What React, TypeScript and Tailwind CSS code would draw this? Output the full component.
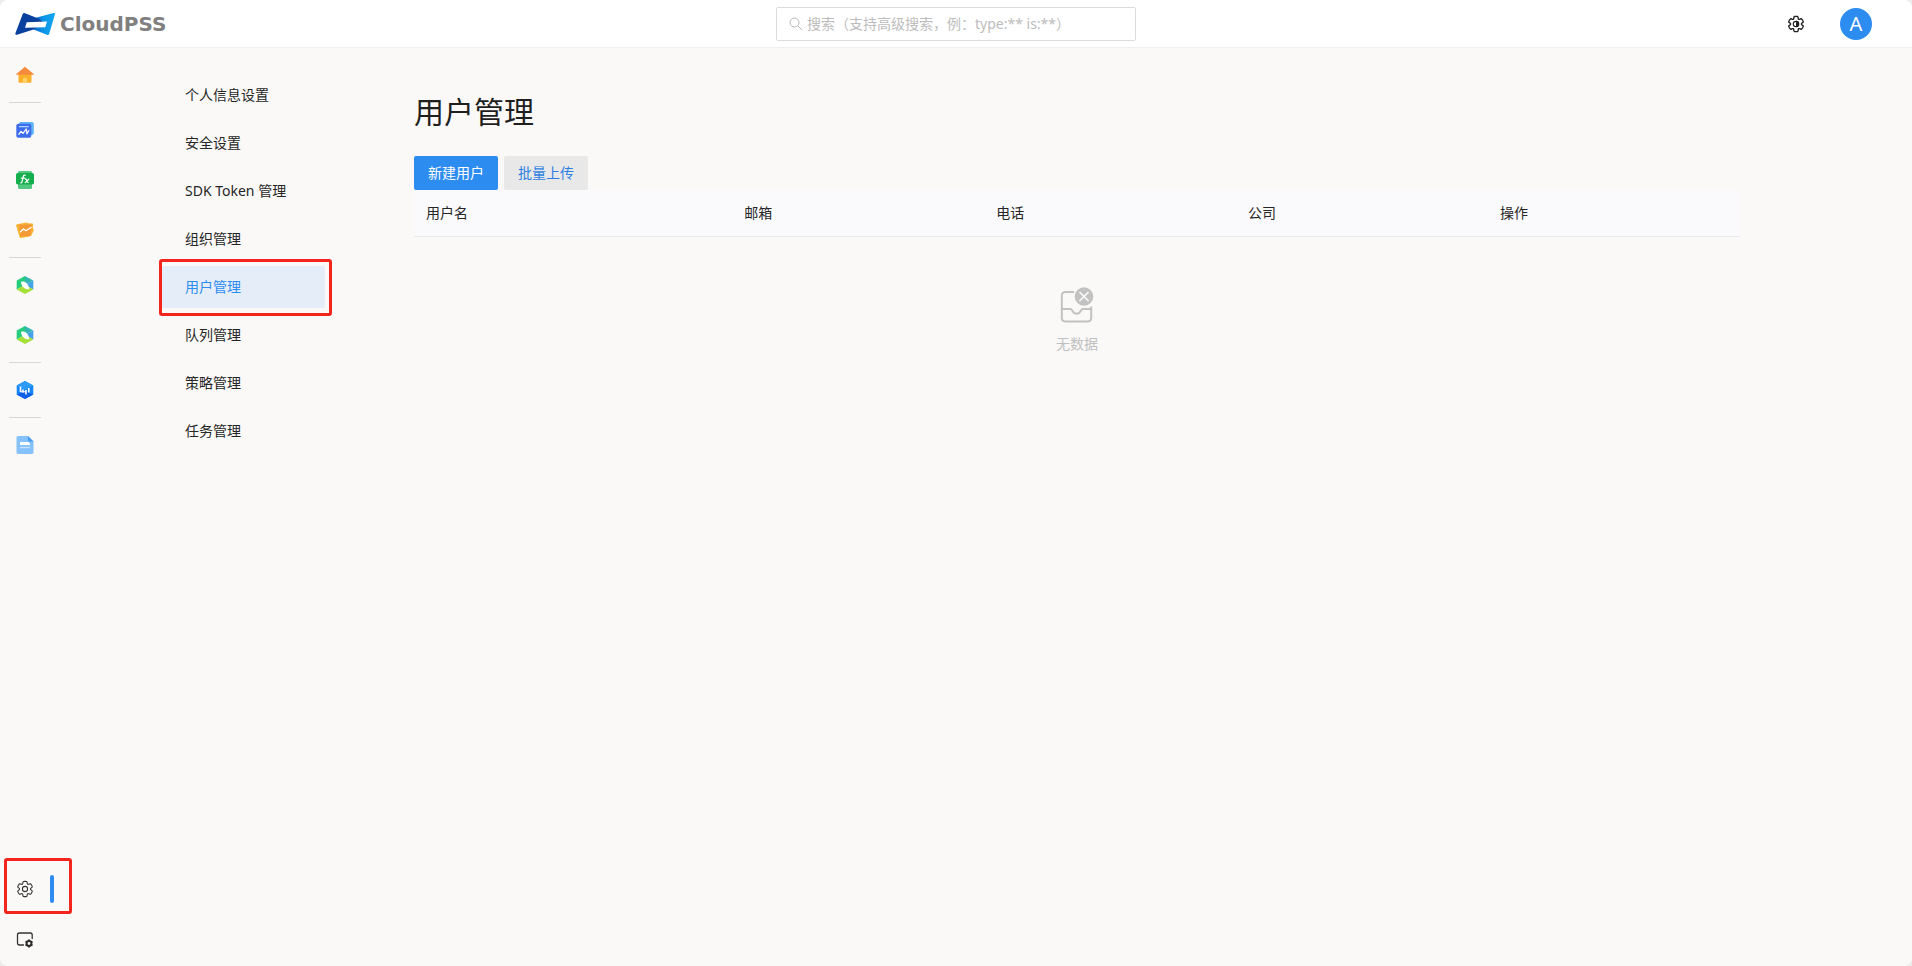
import React from 'react';

const GEAR =
  'M1.91 7.38A8.5 8.5 0 0 1 3.7 4.3a.5.5 0 0 1 .54-.13l1.92.68a1 1 0 0 0 1.32-.76l.36-2a.5.5 0 0 1 .4-.4 8.53 8.53 0 0 1 3.55 0c.2.04.35.2.38.4l.37 2a1 1 0 0 0 1.32.76l1.92-.68a.5.5 0 0 1 .54.13 8.5 8.5 0 0 1 1.78 3.08c.06.2 0 .4-.15.54l-1.56 1.32a1 1 0 0 0 0 1.52l1.56 1.32a.5.5 0 0 1 .15.54 8.5 8.5 0 0 1-1.78 3.08.5.5 0 0 1-.54.13l-1.92-.68a1 1 0 0 0-1.32.76l-.37 2a.5.5 0 0 1-.38.4 8.53 8.53 0 0 1-3.56 0 .5.5 0 0 1-.39-.4l-.36-2a1 1 0 0 0-1.32-.76l-1.92.68a.5.5 0 0 1-.54-.13 8.5 8.5 0 0 1-1.78-3.08.5.5 0 0 1 .15-.54l1.56-1.32a1 1 0 0 0 0-1.52L2.06 7.92a.5.5 0 0 1-.15-.54z';

function LogoMark() {
  return (
    <svg viewBox="0 0 42 24" className="h-6 w-[42px]" aria-hidden="true">
      <defs>
        <linearGradient id="logo-cyan" x1="0" y1="0" x2="1" y2="0">
          <stop offset="0" stopColor="#0a5fc4" />
          <stop offset="0.45" stopColor="#0b93e6" />
          <stop offset="1" stopColor="#12a8f0" />
        </linearGradient>
      </defs>
      <path d="M20 6.300 39.500 1q1.900-.4 1.400 1.400L35.200 21.700q-.6 1.800-2.400 1L19 17.300z" fill="url(#logo-cyan)" />
      <path d="M8.600 2.200Q9.300.5 11 1.200L25 6.800l4 3.200-9.500 7.500L3 22.700q-2.200.6-1.600-1.500z" fill="#0a419e" />
      <path d="M12.700 10.200 33 9.400l-1.700 5.800-20.300.6z" fill="#fff" />
    </svg>
  );
}

function HomeIcon() {
  return (
    <svg viewBox="0 0 18 18" className="size-[18px]" aria-hidden="true">
      <path d="M2.500 7h13v8.500q0 1.300-1.300 1.300H3.800q-1.300 0-1.300-1.300z" fill="#fbb02b" />
      <path d="M9 .8 17.700 8q.4.800-.5.800H.8q-.9 0-.5-.8z" fill="#f58b3c" />
      <path d="M6.900 16.800v-3.200a2.100 2.100 0 0 1 4.200 0v3.200z" fill="#ffd067" />
    </svg>
  );
}

function WorkspaceIcon() {
  return (
    <svg viewBox="0 0 18 18" className="size-[18px]" aria-hidden="true">
      <rect x="3" y="1" width="14.800" height="13" rx="2" fill="#5db4f8" />
      <rect x=".3" y="2.800" width="15" height="14" rx="2" fill="#3f6cea" />
      <path d="M3 5.700h9.700" stroke="#a9d2ff" strokeWidth="1.300" />
      <path d="m2.800 13.300 2.200-3 2 2 3.200-4.300.8 4.800 1.800-3.300" fill="none" stroke="#fff" strokeWidth="1.200" strokeLinecap="round" strokeLinejoin="round" />
    </svg>
  );
}

function FunctionIcon() {
  return (
    <svg viewBox="0 0 18 18" className="size-[18px]" aria-hidden="true">
      <rect x="2" y="0" width="14" height="18" rx="1.500" fill="#52c780" />
      <rect x="0" y="2" width="18" height="11.500" rx="1.800" fill="#15ae4c" />
      <path d="M9.300 4.300Q7.700 3.800 7.300 5.500L6 11q-.3 1-1.300.8M5.300 7.200h3.500M9.500 8.200q1 0 1.300 1.700.3 1.600 1.500 1.600M12.700 8.200 9.200 11.600" fill="none" stroke="#fff" strokeWidth="1.200" strokeLinecap="round" />
    </svg>
  );
}

function ChartIcon() {
  return (
    <svg viewBox="0 0 18 18" className="size-[18px]" aria-hidden="true">
      <path d="M1 3.300 10.500 1.500q1-.2 1.300.8l4.500.2q1 0 .8 1L16.700 7l1.300 2-2.500 5q-.2 1-1.200 1.200L5 17q-1 .2-1.400-.8L.2 4.800q-.3-1.200.8-1.500z" fill="#fbb333" />
      <path d="M3 3.800 15.500 3.300 15 14q-.2 1-1.200 1l-9.300.5z" fill="#f39a36" />
      <path d="m4.500 10.800 3-2.800 2.500 1.700L15 6.500" fill="none" stroke="#fff" strokeWidth="1.300" strokeLinecap="round" strokeLinejoin="round" />
    </svg>
  );
}

function LeafHexIcon() {
  return (
    <svg viewBox="0 0 18 18" className="size-[18px]" aria-hidden="true">
      <path d="M9 0 17.300 4.500 9 9z" fill="#34b7b4" />
      <path d="M17.300 4.500v9L9 9z" fill="#45a2e6" />
      <path d="M9 0v9l-8.300 4.500v-9z" fill="#27cd7c" />
      <path d="m.7 13.500 4.500-2.800h7.600l4.500 2.800L9 18z" fill="#a5df39" />
      <path d="M5.500 6Q11.500 5 12.800 13 6 12.800 5.500 6z" fill="#fff" stroke="#fff" strokeLinejoin="round" />
    </svg>
  );
}

function BarsHexIcon() {
  return (
    <svg viewBox="0 0 18 18" className="size-[18px]" aria-hidden="true">
      <path d="m9 0 8.300 4.500v9L9 18 .7 13.500v-9z" fill="#1685f7" />
      <path d="m9 0 8.300 4.500L9 9 .7 4.500z" fill="#2e9bfa" />
      <path d="M.7 13.500 9 10l8.300 3.500L9 18z" fill="#0d5fe8" />
      <path d="M4.500 5.500v5.500M7 8.500v3M10 9v4.500M12.800 7v4.500" stroke="#fff" strokeWidth="1.600" />
      <path d="M4.500 10.800H10" stroke="#fff" />
    </svg>
  );
}

function DocumentIcon() {
  return (
    <svg viewBox="0 0 18 18" className="size-[18px]" aria-hidden="true">
      <path d="M2.300 0H12l5.500 5.500v10.700q0 1.800-1.800 1.800H2.300Q.5 18 .5 16.200V1.800Q.5 0 2.300 0z" fill="#85c1fb" />
      <path d="m12 0 5.500 5.500h-4Q12 5.500 12 4z" fill="#4b9cf0" />
      <path d="M4 6h8.500l1.500 1.500V9H4z" fill="#fff" />
      <path d="M4 11.500h10" stroke="#c5e1fd" strokeWidth="1.300" />
    </svg>
  );
}

function GearIcon() {
  return (
    <svg viewBox="0 0 20 20" className="size-[18px]" fill="none" stroke="#333" strokeWidth="1.200" aria-hidden="true">
      <path d={GEAR} />
      <circle cx="10" cy="10" r="2.900" />
    </svg>
  );
}

function ThemeGearIcon() {
  return (
    <svg viewBox="0 0 20 20" className="size-[18px]" fill="none" stroke="#222" strokeWidth="1.500" aria-hidden="true">
      <path d={GEAR} />
      <circle cx="10" cy="10" r="3" strokeWidth="1.300" />
      <path d="M10 6.500a3.500 3.500 0 0 1 0 7z" fill="#222" stroke="none" />
    </svg>
  );
}

function WindowGearIcon() {
  return (
    <svg viewBox="0 0 18 18" className="size-[18px]" aria-hidden="true">
      <path d="M7.500 15H3.500q-2 0-2-2V5q0-2 2-2h10.700q2 0 2 2v3.500" fill="none" stroke="#333" strokeWidth="1.300" strokeLinecap="round" />
      <circle cx="13" cy="13.500" r="2.400" fill="none" stroke="#2b2b2b" strokeWidth="2" />
      <path d="M13 9.500v1.600M13 15.900v1.600M9.500 11.500l1.400.8M15.100 14.700l1.400.8M9.500 15.500l1.400-.8M15.100 12.300l1.400-.8" stroke="#2b2b2b" strokeWidth="1.900" />
    </svg>
  );
}

function EmptyIcon() {
  return (
    <svg viewBox="0 0 34 36" className="h-9 w-[34px]" fill="none" stroke="#c2c2c2" strokeWidth="2" aria-hidden="true">
      <path d="M14 5H5.500Q1.800 5 1.800 8.700v22q0 3.700 3.700 3.700h22q3.700 0 3.700-3.700V19.500" />
      <path d="M1.800 22h8.700q1 0 1.500 1.200 1.600 3.600 4.600 3.600t4.600-3.600q.5-1.200 1.500-1.200h8.500" />
      <circle cx="24" cy="9.500" r="9.300" fill="#c2c2c2" stroke="none" />
      <path d="m19.500 5 9 9m0-9-9 9" stroke="#faf9f8" strokeWidth="1.700" />
    </svg>
  );
}

const railGroups = [
  [{ label: '首页', Icon: HomeIcon }],
  [
    { label: '工作台', Icon: WorkspaceIcon },
    { label: '函数', Icon: FunctionIcon },
    { label: '应用', Icon: ChartIcon },
  ],
  [
    { label: '能源规划', Icon: LeafHexIcon },
    { label: '能源运行', Icon: LeafHexIcon },
  ],
  [{ label: '数据分析', Icon: BarsHexIcon }],
  [{ label: '文档', Icon: DocumentIcon }],
];

const menu = ['个人信息设置', '安全设置', 'SDK Token 管理', '组织管理', '用户管理', '队列管理', '策略管理', '任务管理'];
const columns = ['用户名', '邮箱', '电话', '公司', '操作'];
const railButton = 'flex h-[50px] w-[50px] items-center justify-center';

function Rail() {
  return (
    <nav aria-label="主导航" className="flex w-[74px] flex-none flex-col justify-between py-0.5">
      <div>
        {railGroups.map((group, i) => (
          <div key={i}>
            {i > 0 && (
              <div className="flex h-[5px] items-center pl-[9px]">
                <div className="h-px w-8 bg-[#d8d8d8]" />
              </div>
            )}
            {group.map(({ label, Icon }) => (
              <a key={label} href="#" aria-label={label} className={railButton}>
                <Icon />
              </a>
            ))}
          </div>
        ))}
      </div>
      <div>
        <div className="relative flex items-center">
          <a href="#" aria-label="设置" aria-current="page" className={railButton}>
            <GearIcon />
          </a>
          <span className="h-7 w-1 rounded-sm bg-[#2d8cf0]" />
          <span className="pointer-events-none absolute -top-1.5 left-1 h-14 w-17 rounded-[3px] border-3 border-[#f4251c]" />
        </div>
        <a href="#" aria-label="系统设置" className={railButton}>
          <WindowGearIcon />
        </a>
      </div>
    </nav>
  );
}

export default function App() {
  return (
    <div className="min-h-screen bg-[#ececec] font-['Noto_Sans','Noto_Sans_CJK_SC',sans-serif] text-sm text-[#262626]">
      <div className="flex min-h-screen flex-col overflow-hidden rounded-lg bg-[#faf9f8]">
        <header className="grid h-12 flex-none grid-cols-[1fr_360px_1fr] items-center border-b border-[#f0f0f0] bg-white">
          <a href="#" className="flex items-center pl-3.5" aria-label="CloudPSS">
            <LogoMark />
            <span className="pl-1 font-['DejaVu_Sans',sans-serif] text-xl leading-6 font-bold text-[#808080]">CloudPSS</span>
          </a>
          <label className="flex h-[34px] items-center gap-1 rounded-xs border border-[#dcdcdc] px-3">
            <svg viewBox="0 0 14 14" className="size-3.5 flex-none" fill="none" stroke="#b8b8b8" aria-hidden="true">
              <circle cx="5.500" cy="5.500" r="4.500" />
              <path d="m9 9 4 4" />
            </svg>
            <input
              type="search"
              aria-label="搜索"
              placeholder="搜索（支持高级搜索，例：type:** is:**）"
              className="min-w-0 flex-1 bg-transparent outline-none placeholder:text-[#bcbcbc]"
            />
          </label>
          <div className="flex items-center justify-end gap-[35px] pr-10">
            <button type="button" aria-label="主题设置">
              <ThemeGearIcon />
            </button>
            <button type="button" aria-label="账户" className="flex size-8 items-center justify-center rounded-full bg-[#2d8cf0] text-xl text-white">
              A
            </button>
          </div>
        </header>

        <div className="flex flex-1">
          <Rail />
          <aside className="ml-[88px] w-[163px] flex-none pt-[26px]">
            <ul className="flex flex-col gap-1.5">
              {menu.map((item) => {
                const active = item === '用户管理';
                return (
                  <li key={item} className="relative">
                    <a
                      href="#"
                      aria-current={active ? 'page' : undefined}
                      className={
                        active
                          ? 'flex h-[42px] items-center rounded-xs bg-[#e5eef8] pl-[23px] text-[#2d8cf0]'
                          : 'flex h-[42px] items-center pl-[23px]'
                      }
                    >
                      {item}
                    </a>
                    {active && (
                      <span className="pointer-events-none absolute -top-[7px] -right-[7px] -bottom-2 -left-[3px] rounded-[3px] border-3 border-[#f4251c]" />
                    )}
                  </li>
                );
              })}
            </ul>
          </aside>
          <main className="mr-[172px] ml-[89px] min-w-0 flex-1 pt-[43px]">
            <h1 className="text-[30px] leading-[42px] text-[#1f1f1f]">用户管理</h1>
            <div className="mt-[23px] flex gap-1.5">
              <button type="button" className="h-[34px] rounded-xs bg-[#2d8cf0] px-3.5 text-white">
                新建用户
              </button>
              <button type="button" className="h-[34px] rounded-xs bg-[#e8e8e8] px-3.5 text-[#2d7fe0]">
                批量上传
              </button>
            </div>
            <table className="w-full table-fixed border-collapse">
              <thead>
                <tr className="h-[46px] border-b border-[#e9ebee] bg-[#fafafc]">
                  {columns.map((column, i) => (
                    <th key={column} scope="col" className={i === 0 ? 'w-[24%] px-3 text-left font-normal' : 'w-[19%] px-3 text-left font-normal'}>
                      {column}
                    </th>
                  ))}
                </tr>
              </thead>
              <tbody>
                <tr>
                  <td colSpan={5} className="pt-[50px]">
                    <div className="flex flex-col items-center gap-[11px] text-[#c0c0c0]">
                      <EmptyIcon />
                      <span className="leading-5">无数据</span>
                    </div>
                  </td>
                </tr>
              </tbody>
            </table>
          </main>
        </div>
      </div>
    </div>
  );
}
